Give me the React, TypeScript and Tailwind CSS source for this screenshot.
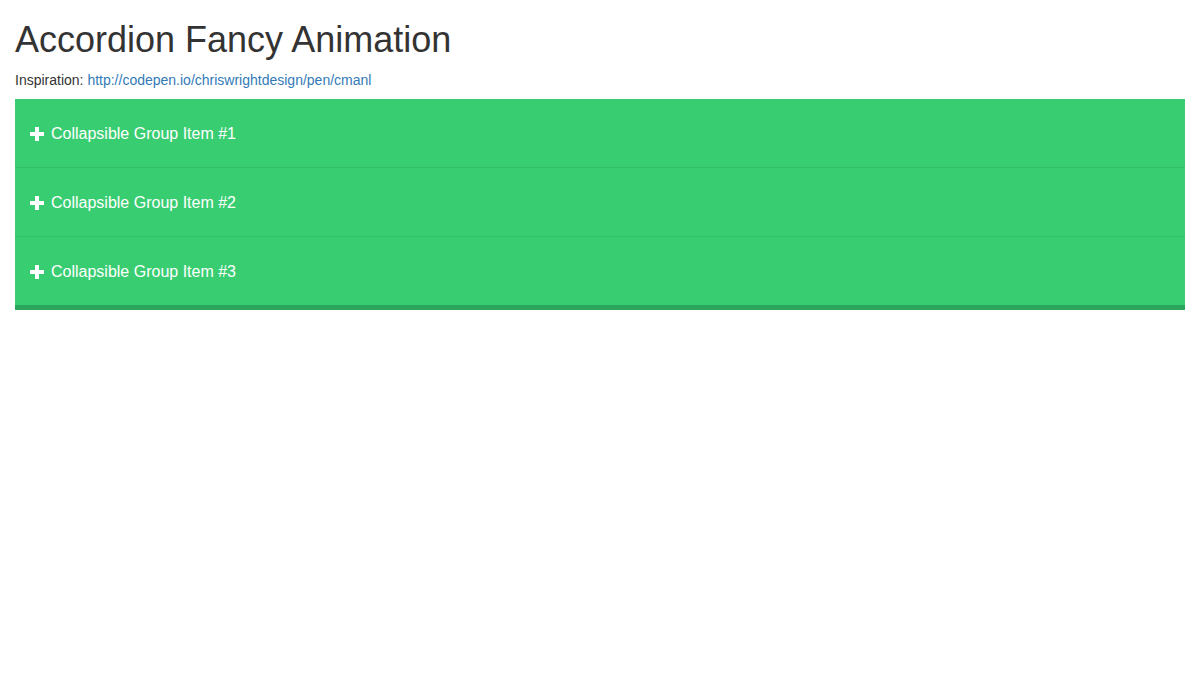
const items = ["Collapsible Group Item #1", "Collapsible Group Item #2", "Collapsible Group Item #3"];

function PlusIcon() {
  return (
    <svg width="14" height="14" viewBox="0 0 14 14" className="shrink-0">
      <path d="M5 0h4v5h5v4H9v5H5V9H0V5h5z" fill="#fff" />
    </svg>
  );
}

export default function App() {
  return (
    <div className="min-h-screen bg-white px-[15px] text-[14px] leading-[20px] text-[#333] font-['Liberation_Sans',Arial,sans-serif]">
      <h1 className="mt-[20px] mb-[10px] text-[36px] leading-[1.1] font-normal">Accordion Fancy Animation</h1>
      <p className="mb-[9px]">
        Inspiration:{" "}
        <a href="#" className="text-[#337ab7]">
          http://codepen.io/chriswrightdesign/pen/cmanl
        </a>
      </p>
      <div className="bg-[#39cd72] border-b-[5px] border-[#2ca65b]">
        {items.map((label, i) => (
          <div
            key={label}
            className={`box-content flex items-center gap-[7px] h-[66px] pt-[2px] pl-[15px] text-white text-[16px] ${
              i < items.length - 1 ? "border-b border-[#33bf68]" : ""
            }`}
          >
            <PlusIcon />
            <span>{label}</span>
          </div>
        ))}
      </div>
    </div>
  );
}
